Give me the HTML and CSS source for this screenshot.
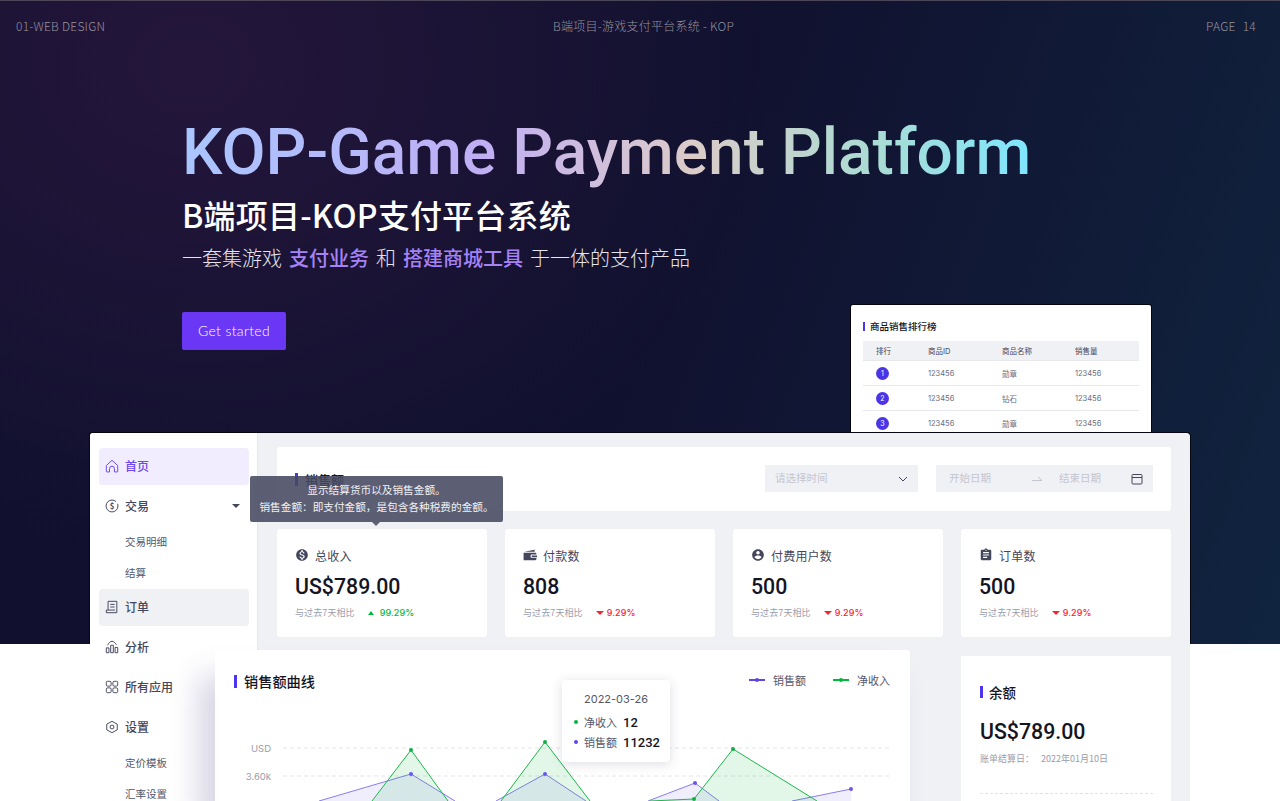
FILE: index.html
```html
<html>
  <head>
    <title>KOP-Game Payment Platform</title>
    <link rel="stylesheet" href="styles.css">
  </head>
  <body>
    <div class="slide">
      <section class="hero">
        <header class="topbar">
          <span>01-WEB DESIGN</span>
          <span class="topbar-center">B端项目-游戏支付平台系统 - KOP</span>
          <span class="topbar-page"><span>PAGE</span><span>14</span></span>
        </header>
        <h1 class="hero-title">KOP-Game Payment Platform</h1>
        <h2 class="hero-sub">B端项目-KOP支付平台系统</h2>
        <p class="hero-desc">一套集游戏<b>支付业务</b>和<b>搭建商城工具</b>于一体的支付产品</p>
        <a class="hero-btn">Get started</a>
      </section>

      <div class="rank-card">
        <div class="bar-title rank-title">商品销售排行榜</div>
        <div class="rank-row rank-head"><span>排行</span><span>商品ID</span><span>商品名称</span><span>销售量</span></div>
        <div class="rank-row"><span><i class="rank-no">1</i></span><span>123456</span><span>勋章</span><span>123456</span></div>
        <div class="rank-row"><span><i class="rank-no">2</i></span><span>123456</span><span>钻石</span><span>123456</span></div>
        <div class="rank-row"><span><i class="rank-no">3</i></span><span>123456</span><span>勋章</span><span>123456</span></div>
      </div>

      <div class="dash">
        <nav class="side">
          <a class="nav-item active">
            <svg viewBox="0 0 16 16"><path d="M1.500 7.500 8 1.500l6.500 6V14a.8.8 0 0 1-.8.8h-2.900V11a2.800 2.800 0 0 0-5.600 0v3.800H2.300a.8.8 0 0 1-.8-.8z"/></svg>首页
          </a>
          <a class="nav-item">
            <svg viewBox="0 0 16 16"><circle cx="8" cy="8" r="6.800" stroke-dasharray="36 3"/><text x="8" y="11.300" class="nav-dollar">$</text></svg>交易<i class="caret"></i>
          </a>
          <a class="nav-sub">交易明细</a>
          <a class="nav-sub">结算</a>
          <a class="nav-item current">
            <svg viewBox="0 0 16 16"><path d="M3.500 1.500h10v13H1.500v-3h2zM3.500 11.500h8M6 5h5M6 8h5"/></svg>订单
          </a>
          <a class="nav-item">
            <svg viewBox="0 0 16 16"><path d="M1.500 14.500V9h3v5.500zM6.500 14.500V6h3v8.500zM11.500 14.500V8.500h3v6zM3 6c1.500-3 3-4.500 5-4.500s3.500 1.500 5 4"/></svg>分析
          </a>
          <a class="nav-item">
            <svg viewBox="0 0 16 16"><rect x="1.500" y="1.500" width="5.500" height="5.500" rx="1.500"/><rect x="9" y="1.500" width="5.500" height="5.500" rx="1.500"/><rect x="1.500" y="9" width="5.500" height="5.500" rx="1.500"/><rect x="9" y="9" width="5.500" height="5.500" rx="1.500"/></svg>所有应用
          </a>
          <a class="nav-item">
            <svg viewBox="0 0 16 16"><path d="M8 1.500l6 3.300v6.400l-6 3.300-6-3.300V4.800z"/><circle cx="8" cy="8" r="2.200"/></svg>设置
          </a>
          <a class="nav-sub">定价模板</a>
          <a class="nav-sub">汇率设置</a>
        </nav>

        <main class="main">
          <div class="filter-card">
            <div class="bar-title filter-title">销售额</div>
            <div class="select">
              <span>请选择时间</span>
              <svg class="select-arrow" viewBox="0 0 10 6"><path d="M1 1l4 4 4-4"/></svg>
            </div>
            <div class="range">
              <span>开始日期</span>
              <svg class="range-arrow" viewBox="0 0 10 5"><path d="M0 4.500h10L6 1"/></svg>
              <span>结束日期</span>
              <svg class="range-cal" viewBox="0 0 12 12"><rect x="1" y="1.500" width="10" height="9.500" rx="1"/><path d="M1 4.500h10"/></svg>
            </div>
          </div>

          <div class="stats">
            <div class="stat">
              <div class="stat-label"><svg viewBox="0 0 24 24"><path d="M12 2C6.480 2 2 6.480 2 12s4.480 10 10 10 10-4.480 10-10S17.520 2 12 2zm1.410 16.090V20h-2.670v-1.930c-1.710-.36-3.160-1.460-3.270-3.400h1.960c.1 1.050.82 1.870 2.650 1.870 1.960 0 2.400-.98 2.400-1.590 0-.83-.44-1.610-2.670-2.140-2.480-.6-4.180-1.620-4.180-3.670 0-1.720 1.390-2.840 3.110-3.210V4h2.670v1.950c1.860.45 2.790 1.860 2.850 3.390H14.300c-.05-1.110-.64-1.870-2.220-1.870-1.500 0-2.400.68-2.400 1.640 0 .84.65 1.390 2.670 1.910s4.180 1.390 4.180 3.910c-.01 1.830-1.380 2.830-3.120 3.160z"/></svg>总收入</div>
              <div class="amount">US$789.00</div>
              <div class="compare">与过去7天相比<i class="tri up"></i><b class="pct up">99.29%</b></div>
            </div>
            <div class="stat">
              <div class="stat-label"><svg viewBox="0 0 24 24"><path d="M23 19c0 1.100-.9 2-2 2H1V8h20c1.100 0 2 .9 2 2v1h-8c-1.100 0-2 .9-2 2v2c0 1.100.9 2 2 2h8zM15 13h9v3h-9zM2 6.500 20 3v3.500z"/></svg>付款数</div>
              <div class="amount">808</div>
              <div class="compare">与过去7天相比<i class="tri down"></i><b class="pct down">9.29%</b></div>
            </div>
            <div class="stat">
              <div class="stat-label"><svg viewBox="0 0 24 24"><path d="M12 2C6.480 2 2 6.480 2 12s4.480 10 10 10 10-4.480 10-10S17.520 2 12 2zm0 3c1.660 0 3 1.340 3 3s-1.340 3-3 3-3-1.340-3-3 1.340-3 3-3zm0 14.200c-2.500 0-4.710-1.280-6-3.220.03-1.990 4-3.080 6-3.080 1.990 0 5.970 1.090 6 3.080-1.290 1.940-3.500 3.220-6 3.220z"/></svg>付费用户数</div>
              <div class="amount">500</div>
              <div class="compare">与过去7天相比<i class="tri down"></i><b class="pct down">9.29%</b></div>
            </div>
            <div class="stat">
              <div class="stat-label"><svg viewBox="0 0 24 24"><path d="M19 3h-4.180C14.400 1.840 13.300 1 12 1c-1.300 0-2.400.84-2.820 2H5c-1.100 0-2 .9-2 2v14c0 1.100.9 2 2 2h14c1.100 0 2-.9 2-2V5c0-1.100-.9-2-2-2zm-7 0c.55 0 1 .45 1 1s-.45 1-1 1-1-.45-1-1 .45-1 1-1zm2 14H7v-2h7v2zm3-4H7v-2h10v2zm0-4H7V7h10v2z"/></svg>订单数</div>
              <div class="amount">500</div>
              <div class="compare">与过去7天相比<i class="tri down"></i><b class="pct down">9.29%</b></div>
            </div>
          </div>

          <div class="balance">
            <div class="bar-title balance-title">余额</div>
            <div class="amount">US$789.00</div>
            <div class="bill"><span>账单结算日：</span><span>2022年01月10日</span></div>
            <div class="balance-line"></div>
          </div>
        </main>
      </div>

      <div class="hint">
        显示结算货币以及销售金额。<br>销售金额：即支付金额，是包含各种税费的金额。
      </div>

      <div class="chart-card">
        <div class="chart-head">
          <div class="bar-title chart-title">销售额曲线</div>
          <div class="legend">
            <span class="legend-item"><i class="legend-mark purple"></i>销售额</span>
            <span class="legend-item"><i class="legend-mark green"></i>净收入</span>
          </div>
        </div>
        <svg class="chart" viewBox="0 0 695 151" width="695" height="151">
          <text class="axis" x="56" y="102" text-anchor="end">USD</text>
          <text class="axis" x="56" y="130" text-anchor="end">3.60k</text>
          <path class="grid" d="M68 98H676M68 126H676"/>
          <path class="area-p" d="M104 151 196 124 240 151zM281 151 330 124 371 151zM433 151 480 133 504 151zM577 151 636 139V151z"/>
          <path class="line-p" d="M104 151 196 124 240 151M281 151 330 124 371 151M433 151 480 133 504 151M577 151 636 139"/>
          <path class="area-g" d="M157 151 196 100 233 151zM286 151 330 92 375 151zM435 151 479 149 518 99 602 151z"/>
          <path class="line-g" d="M157 151 196 100 233 151M286 151 330 92 375 151M435 151 479 149 518 99 602 151"/>
          <g class="dots-p"><circle cx="196" cy="124" r="2"/><circle cx="330" cy="124" r="2"/><circle cx="480" cy="133" r="2"/><circle cx="636" cy="139" r="2"/></g>
          <g class="dots-g"><circle cx="196" cy="100" r="2"/><circle cx="330" cy="92" r="2"/><circle cx="518" cy="99" r="2"/><circle cx="479" cy="149" r="2"/></g>
        </svg>
        <div class="chart-tip">
          <div class="tip-date">2022-03-26</div>
          <div class="tip-row"><i class="tip-dot green"></i>净收入<b>12</b></div>
          <div class="tip-row"><i class="tip-dot purple"></i>销售额<b>11232</b></div>
        </div>
      </div>
    </div>
  </body>
</html>
```

FILE: styles.css
```css
html,
body {
  padding: 0;
  margin: 0;
  background: #fff;
}

body {
  font-family: "Noto Sans CJK SC", "Noto Sans", sans-serif;
  color: #14151f;
}

i {
  font-style: normal;
}

.slide {
  position: relative;
  height: 801px;
  overflow: hidden;
}

/* dark top part */
.hero {
  box-sizing: border-box;
  height: 644px;
  padding: 0 24px 0 182px;
  background:
    radial-gradient(850px 700px at 15% 10%, #24163b 0%, rgba(36, 22, 59, 0) 70%),
    linear-gradient(110deg, #11102e 0%, #10112f 50%, #10243f 100%);
  border-top: 1px solid #4b4759;
  color: #fff;
}

.topbar {
  display: flex;
  justify-content: space-between;
  align-items: center;
  margin: 15px 0 0 -166px;
  height: 18px;
  font-size: 12px;
  font-weight: 300;
  letter-spacing: 0.25px;
  color: #96939f;
}

.topbar-center {
  position: relative;
  left: -12px;
}

.topbar-page {
  display: flex;
  gap: 7px;
}

.hero-title {
  display: inline-block;
  margin: 81px 0 0;
  font-family: Roboto, sans-serif;
  font-size: 64px;
  line-height: 75px;
  font-weight: 500;
  white-space: nowrap;
  background: linear-gradient(90deg, #a9c6ff 0%, #c0aef5 35%, #dccbc8 60%, #a9dcd4 82%, #7fe6ff 100%);
  -webkit-background-clip: text;
  background-clip: text;
  color: transparent;
}

.hero-sub {
  margin: 1px 0 0;
  font-size: 32px;
  line-height: 46px;
  font-weight: 500;
  letter-spacing: 0.2px;
}

.hero-desc {
  margin: 6px 0 0;
  font-size: 20px;
  line-height: 29px;
  font-weight: 300;
  color: #e6e4ec;
}

.hero-desc b {
  margin: 0 7px;
  font-weight: 500;
  color: #a583f7;
}

.hero-btn {
  display: flex;
  justify-content: center;
  align-items: center;
  box-sizing: border-box;
  width: 104px;
  height: 38px;
  margin-top: 40px;
  padding-bottom: 1px;
  border-radius: 2px;
  background: #6a38f5;
  font-family: Lato, sans-serif;
  font-size: 14px;
  font-weight: 300;
  letter-spacing: 0.35px;
  color: #fff;
}

.bar-title {
  display: flex;
  align-items: center;
  font-weight: 500;
  color: #14151f;
}

.bar-title::before {
  content: "";
  flex: none;
  background: #4c35f0;
}

/* ranking card behind the dashboard */
.rank-card {
  position: absolute;
  top: 305px;
  left: 851px;
  box-sizing: border-box;
  width: 300px;
  height: 140px;
  padding: 13px 12px 0;
  background: #fff;
  border-radius: 2px;
  box-shadow: 0 0 0 1px #05060f;
}

.rank-title {
  height: 16px;
  margin-bottom: 7px;
  font-size: 9.500px;
}

.rank-title::before {
  width: 2px;
  height: 9px;
  margin-right: 5px;
}

.rank-row {
  display: grid;
  grid-template-columns: 52px 74px 73px 1fr;
  align-items: center;
  height: 25px;
  padding-left: 13px;
  border-bottom: 1px solid #e8e9ee;
  box-sizing: border-box;
  font-family: Inter, "Noto Sans CJK SC", sans-serif;
  font-size: 7.500px;
  color: #6a6c80;
}

.rank-head {
  height: 20px;
  background: #f0f1f5;
  color: #44465a;
}

.rank-no {
  display: flex;
  justify-content: center;
  align-items: center;
  width: 13px;
  height: 13px;
  border-radius: 50%;
  background: #4c35e8;
  font-size: 7px;
  color: #fff;
}

/* dashboard window */
.dash {
  position: absolute;
  top: 433px;
  left: 90px;
  display: flex;
  width: 1100px;
  height: 368px;
  background: #f0f1f5;
  border-radius: 3px 3px 0 0;
}

/* the dark outline only shows over the dark hero */
.dash::before {
  content: "";
  position: absolute;
  top: 0;
  left: 0;
  right: 0;
  height: 211px;
  border-radius: 3px 3px 0 0;
  box-shadow: 0 0 0 1px #05060f;
  clip-path: inset(-1px -1px 0 -1px);
}

.side {
  position: relative;
  box-sizing: border-box;
  width: 168px;
  padding: 15px 8px 0 9px;
  background: #fff;
  border-right: 1px solid #e6e7ec;
  border-radius: 3px 0 0 0;
}

.nav-item {
  display: flex;
  align-items: center;
  gap: 6px;
  box-sizing: border-box;
  height: 37px;
  margin-bottom: 3px;
  padding: 0 0 2px 6px;
  border-radius: 4px;
  font-size: 12px;
  font-weight: 500;
  color: #44465c;
}

.nav-item svg {
  width: 14px;
  height: 14px;
  fill: none;
  stroke: currentColor;
  stroke-width: 1.100;
}

.nav-dollar {
  font-size: 9px;
  font-weight: 700;
  text-anchor: middle;
  fill: currentColor;
  stroke: none;
}

.nav-item.active {
  background: #f1edfe;
  color: #6a45f0;
}

.nav-item.current {
  background: #f0f1f5;
}

.nav-sub {
  display: flex;
  align-items: center;
  box-sizing: border-box;
  height: 31px;
  padding: 0 0 1px 26px;
  font-size: 10.500px;
  color: #55576b;
}

.nav-item + .nav-sub {
  margin-top: -2px;
}

.nav-sub + .nav-item {
  margin-top: 1px;
}

.caret {
  width: 0;
  height: 0;
  margin-left: auto;
  margin-right: 9px;
  border: 4px solid transparent;
  border-top-color: #44465c;
  border-bottom: 0;
}

.main {
  position: relative;
  flex: 1;
  padding: 14px 19px 0 19px;
}

.filter-card {
  display: flex;
  align-items: center;
  height: 64px;
  padding: 0 18px;
  background: #fff;
  border-radius: 3px;
}

.filter-title {
  margin-right: auto;
  font-size: 13px;
}

.filter-title::before {
  width: 3px;
  height: 13px;
  margin-right: 7px;
}

.select,
.range {
  display: flex;
  align-items: center;
  box-sizing: border-box;
  height: 27px;
  margin-top: -1px;
  background: #f0f1f5;
  font-size: 10.500px;
  color: #c3c5cf;
}

.select span,
.range span {
  margin-top: -2px;
}

.select {
  width: 153px;
  padding: 0 10px;
  justify-content: space-between;
}

.select-arrow {
  width: 10px;
  height: 6px;
  fill: none;
  stroke: #44465c;
}

.range {
  width: 217px;
  margin-left: 18px;
  padding: 0 10px 0 13px;
}

.range-arrow {
  width: 10px;
  height: 5px;
  margin: 0 17px 0 41px;
  fill: none;
  stroke: #c3c5cf;
}

.range-cal {
  width: 12px;
  height: 12px;
  margin-left: auto;
  fill: none;
  stroke: #44465c;
}

.stats {
  display: grid;
  grid-template-columns: repeat(4, 210px);
  gap: 18px;
  margin-top: 18px;
}

.stat {
  box-sizing: border-box;
  height: 108px;
  padding: 16px 18px 0;
  background: #fff;
  border-radius: 3px;
}

.stat-label {
  display: flex;
  align-items: center;
  gap: 6px;
  height: 20px;
  font-size: 12px;
  letter-spacing: 0.2px;
  color: #44465c;
}

.stat-label svg {
  width: 14px;
  height: 14px;
  fill: #44465c;
}

.amount {
  margin-top: 7px;
  font-family: Roboto, sans-serif;
  font-size: 21.300px;
  line-height: 30px;
  font-weight: 500;
  color: #14151f;
}

.compare {
  display: flex;
  align-items: center;
  margin-top: 4px;
  font-size: 9px;
  line-height: 14px;
  letter-spacing: 0.1px;
  color: #9a9cab;
}

.tri {
  width: 0;
  height: 0;
  margin-left: 13px;
  border: 3.500px solid transparent;
}

.tri.up {
  margin-right: 6px;
  border-top: 0;
  border-bottom: 4px solid #00b93a;
}

.tri.down {
  margin-right: 3px;
  border-left-width: 4.500px;
  border-right-width: 4.500px;
  border-bottom: 0;
  border-top: 4px solid #f8232f;
}

.pct {
  font-family: Inter, sans-serif;
  font-weight: 500;
}

.pct.up {
  color: #00b93a;
}

.pct.down {
  color: #f8232f;
}

.balance {
  box-sizing: border-box;
  width: 210px;
  height: 160px;
  margin: 19px 0 0 auto;
  padding: 27px 18px 0 19px;
  background: #fff;
}

.balance-title {
  font-size: 13.500px;
  height: 18px;
}

.balance-title::before {
  width: 3px;
  height: 12px;
  margin-right: 6px;
}

.balance .amount {
  margin-top: 16px;
}

.bill {
  display: flex;
  gap: 7px;
  margin-top: 5px;
  font-size: 9px;
  line-height: 14px;
  color: #9a9cab;
}

.balance-line {
  margin-top: 27px;
  border-top: 1px dashed #e2e3e9;
}

/* tooltip over the filter card */
.hint {
  position: absolute;
  top: 476px;
  left: 250px;
  box-sizing: border-box;
  width: 253px;
  height: 46px;
  padding-top: 5px;
  background: rgba(70, 73, 97, 0.88);
  border-radius: 2px;
  text-align: center;
  font-size: 10.650px;
  line-height: 17px;
  color: #f2f2f6;
}

.hint::after {
  content: "";
  position: absolute;
  top: 100%;
  left: 122px;
  border: 4px solid transparent;
  border-top-color: #5f6277;
  border-bottom: 0;
}

/* floating chart */
.chart-card {
  position: absolute;
  top: 650px;
  left: 215px;
  width: 695px;
  height: 151px;
  background: #fff;
  border-radius: 4px 4px 0 0;
  box-shadow: -16px 26px 30px rgba(70, 60, 130, 0.22);
}

.chart-head {
  position: relative;
  z-index: 1;
  display: flex;
  justify-content: space-between;
  padding: 21px 20px 0 19px;
}

.chart-title {
  font-size: 14.200px;
  line-height: 20px;
}

.chart-title::before {
  width: 3px;
  height: 13px;
  margin-right: 7px;
}

.legend {
  display: flex;
  gap: 27px;
  margin-top: -2px;
}

.legend-item {
  display: flex;
  align-items: center;
  gap: 8px;
  font-size: 11px;
  line-height: 20px;
  color: #55576b;
}

.legend-mark {
  position: relative;
  width: 16px;
  height: 1.500px;
}

.legend-mark::after {
  content: "";
  position: absolute;
  top: -1.500px;
  left: 6px;
  width: 4px;
  height: 4px;
  border-radius: 50%;
  background: inherit;
}

.purple {
  background: #5a47e8;
}

.green {
  background: #00b93a;
}

.chart {
  position: absolute;
  top: 0;
  left: 0;
}

.axis {
  font-family: Inter, sans-serif;
  font-size: 9.500px;
  fill: #9a9cab;
}

.grid {
  fill: none;
  stroke: #e4e5ea;
  stroke-dasharray: 4 3;
}

.area-p {
  fill: rgba(110, 90, 240, 0.1);
}

.line-p {
  fill: none;
  stroke: #8a7bf0;
}

.area-g {
  fill: rgba(0, 185, 58, 0.11);
}

.line-g {
  fill: none;
  stroke: #1cb84c;
}

.dots-p {
  fill: #6a55ee;
}

.dots-g {
  fill: #10b044;
}

.chart-tip {
  position: absolute;
  top: 30px;
  left: 347px;
  box-sizing: border-box;
  width: 108px;
  height: 82px;
  padding: 9px 0 0 12px;
  background: #fff;
  border-radius: 4px;
  box-shadow: 0 2px 12px rgba(50, 50, 90, 0.16);
}

.tip-date {
  padding-left: 10px;
  margin-bottom: 3px;
  font-family: Inter, sans-serif;
  font-size: 11px;
  line-height: 20px;
  color: #55576b;
}

.tip-row {
  display: flex;
  align-items: center;
  height: 20px;
  font-size: 11px;
  color: #55576b;
}

.tip-row b {
  margin-left: 6px;
  font-family: Roboto, sans-serif;
  font-size: 13px;
  font-weight: 500;
  color: #14151f;
}

.tip-dot {
  width: 4px;
  height: 4px;
  margin-right: 6px;
  border-radius: 50%;
}
```
